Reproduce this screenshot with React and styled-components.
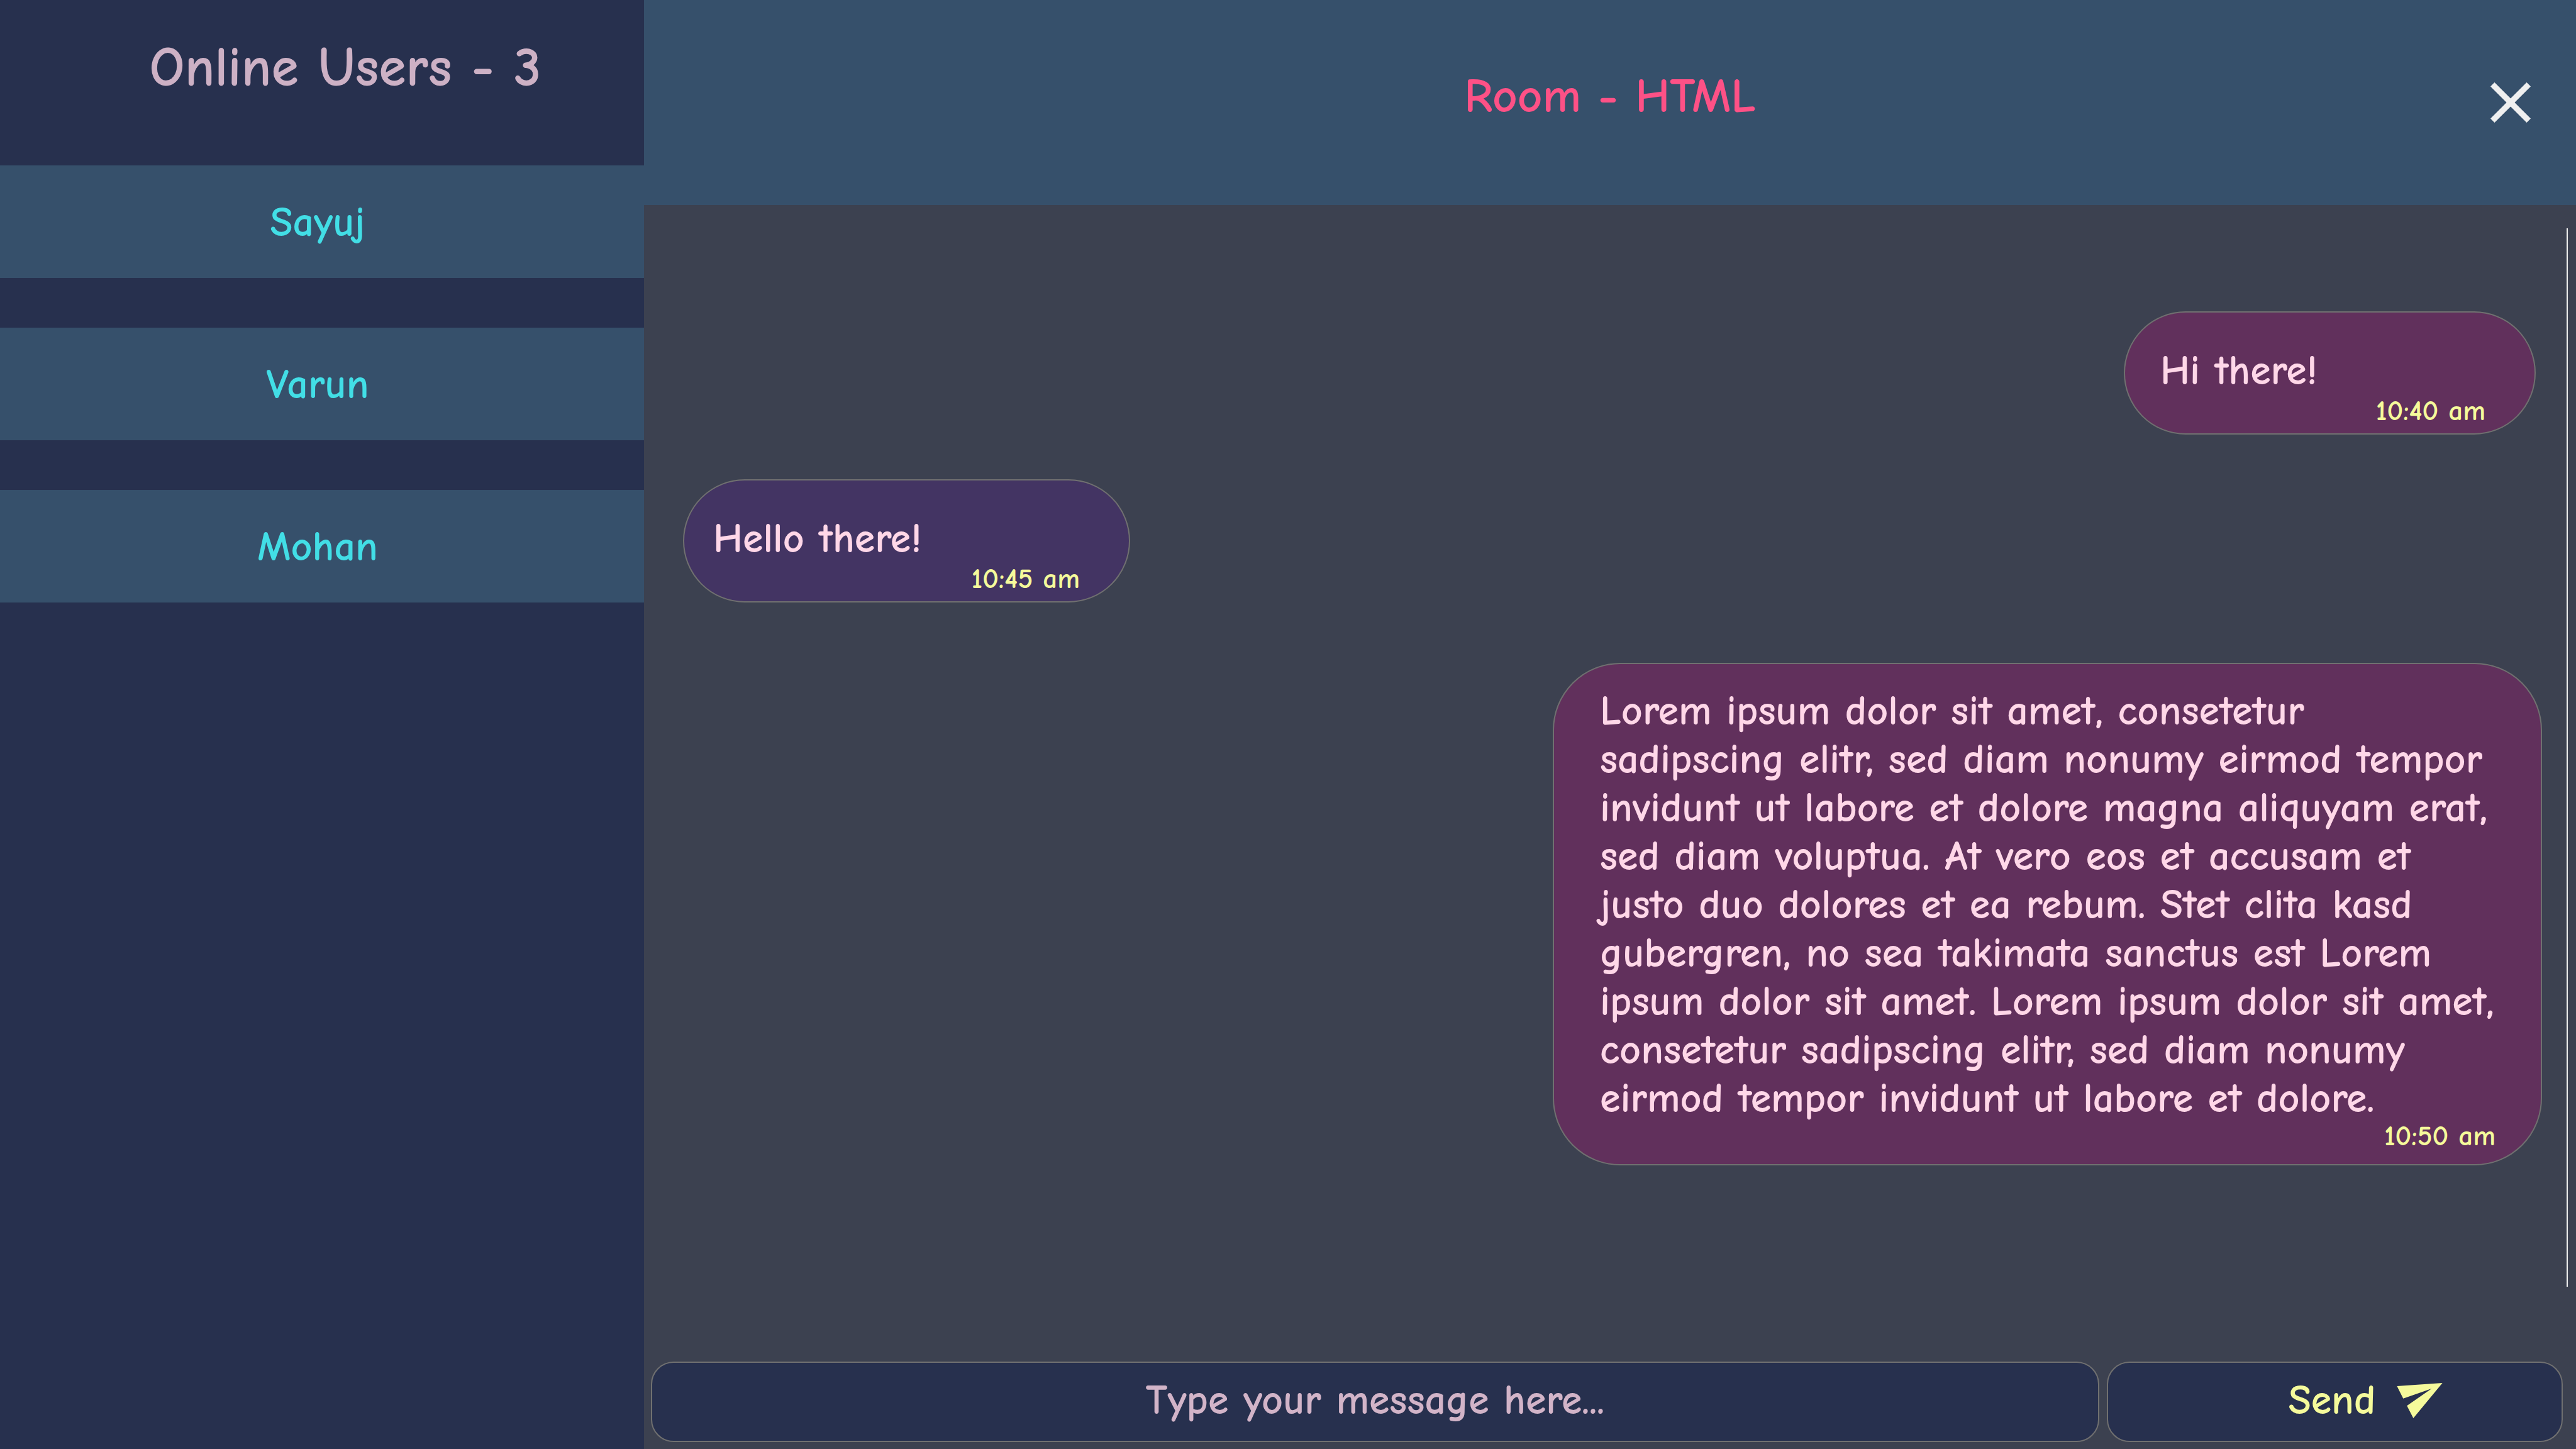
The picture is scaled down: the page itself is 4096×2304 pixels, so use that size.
import React from "react";
import styled, { createGlobalStyle } from "styled-components";

const GlobalStyle = createGlobalStyle`
  *, *::before, *::after { box-sizing: border-box; }
  body {
    margin: 0;
    background: #3c4150;
    font-family: "Comic Neue", Lato, "Noto Sans", sans-serif;
    font-weight: 700;
    font-size: 66px;
    line-height: 77px;
  }
`;

const Page = styled.div`
  display: grid;
  grid-template-columns: 25% minmax(0, 1fr);
  min-height: 100vh;
`;

const Sidebar = styled.aside`
  background: #27304e;
`;

const SidebarTitle = styled.h1`
  margin: 0;
  padding: 57px 0 104px 74px;
  color: #cdb1c5;
  font-size: 88px;
  line-height: 102px;
  text-align: center;
`;

const UserList = styled.ul`
  display: flex;
  flex-direction: column;
  gap: 79px;
  margin: 0;
  padding: 0;
  list-style: none;
`;

const User = styled.li`
  padding: 53px 14px 49px 0;
  background: #36506b;
  color: #42dee6;
  text-align: center;
`;

const Room = styled.main`
  display: grid;
  grid-template-rows: auto minmax(0, 1fr) auto;
`;

const RoomHeader = styled.header`
  display: grid;
  grid-template-columns: 1fr auto 1fr;
  align-items: center;
  padding: 108px 72px;
  background: #36506b;
`;

const RoomTitle = styled.h2`
  grid-column: 2;
  margin: 0;
  padding-bottom: 20px;
  color: #fe5186;
  font-size: 77px;
  line-height: 90px;
`;

const CloseButton = styled.button`
  justify-self: end;
  display: flex;
  padding: 0;
  border: 0;
  background: none;
  color: #f0f0f0;
  cursor: pointer;

  svg {
    width: 64px;
    height: 64px;
  }
`;

const Conversation = styled.section`
  display: flex;
`;

const Messages = styled.div`
  flex: 1;
  display: flex;
  flex-direction: column;
  gap: 71px;
  padding: 169px 39px 71px 62px;
`;

const ScrollLine = styled.div`
  width: 2px;
  margin: 37px 13px 119px 0;
  background: #f0f0f0;
`;

const Bubble = styled.article`
  display: flex;
  flex-direction: column;
  align-self: ${(p) => (p.$own ? "flex-end" : "flex-start")};
  width: ${(p) => p.$width}px;
  gap: ${(p) => (p.$long ? 0 : 4)}px;
  margin: ${(p) => (p.$long ? "25px 0 0" : p.$own ? "0 10px 0 0" : "0")};
  padding: ${(p) => (p.$long ? "37px 72px 25px 73px" : p.$own ? "55px 78px 16px 56px" : "55px 78px 16px 46px")};
  border: 2px solid #707070;
  border-radius: 107px;
  background: ${(p) => (p.$own ? "#61305c" : "#433463")};
`;

const BubbleText = styled.p`
  margin: 0;
  color: #ffd7e8;
`;

const Time = styled.time`
  align-self: flex-end;
  color: #f5fa9b;
  font-size: 45px;
  line-height: 40px;
`;

const Composer = styled.form`
  display: grid;
  grid-template-columns: minmax(0, 1fr) 725px;
  gap: 12px;
  padding: 0 21px 11px 11px;
`;

const MessageInput = styled.input`
  height: 128px;
  padding: 0 36px 4px;
  border: 2px solid #707070;
  border-radius: 36px;
  background: #27304e;
  color: #d2b4c8;
  font: inherit;
  text-align: center;
  outline: 0;

  &::placeholder {
    color: #d2b4c8;
    opacity: 1;
  }
`;

const SendButton = styled.button`
  display: flex;
  align-items: center;
  justify-content: center;
  gap: 34px;
  height: 128px;
  padding: 0 0 4px 98px;
  border: 2px solid #707070;
  border-radius: 36px;
  background: #27304e;
  color: #f5fa9b;
  font: inherit;
  cursor: pointer;

  svg {
    width: 73px;
    height: 56px;
  }
`;

const users = ["Sayuj", "Varun", "Mohan"];

const messages = [
  { text: "Hi there!", time: "10:40 am", own: true, width: 655 },
  { text: "Hello there!", time: "10:45 am", own: false, width: 711 },
  {
    text: "Lorem ipsum dolor sit amet, consetetur sadipscing elitr, sed diam nonumy eirmod tempor invidunt ut labore et dolore magna aliquyam erat, sed diam voluptua. At vero eos et accusam et justo duo dolores et ea rebum. Stet clita kasd gubergren, no sea takimata sanctus est Lorem ipsum dolor sit amet. Lorem ipsum dolor sit amet, consetetur sadipscing elitr, sed diam nonumy eirmod tempor invidunt ut labore et dolore.",
    time: "10:50 am",
    own: true,
    long: true,
    width: 1573,
  },
];

function CloseIcon() {
  return (
    <svg viewBox="5 5 14 14" fill="currentColor" aria-hidden="true">
      <path d="M19 6.41 17.59 5 12 10.59 6.41 5 5 6.41 10.59 12 5 17.59 6.41 19 12 13.41 17.59 19 19 17.59 13.41 12z" />
    </svg>
  );
}

function SendIcon() {
  return (
    <svg viewBox="0 0 102 79" fill="currentColor" aria-hidden="true">
      <path d="M0 7 102 0 36.7 79 22.3 51.3 77.7 12.7 14 35z" />
    </svg>
  );
}

export default function App() {
  return (
    <>
      <GlobalStyle />
      <Page>
        <Sidebar>
          <SidebarTitle>Online Users - {users.length}</SidebarTitle>
          <UserList>
            {users.map((name) => (
              <User key={name}>{name}</User>
            ))}
          </UserList>
        </Sidebar>
        <Room>
          <RoomHeader>
            <RoomTitle>Room - HTML</RoomTitle>
            <CloseButton type="button" aria-label="Leave room">
              <CloseIcon />
            </CloseButton>
          </RoomHeader>
          <Conversation>
            <Messages>
              {messages.map((m) => (
                <Bubble key={m.time} $own={m.own} $long={m.long} $width={m.width}>
                  <BubbleText>{m.text}</BubbleText>
                  <Time>{m.time}</Time>
                </Bubble>
              ))}
            </Messages>
            <ScrollLine />
          </Conversation>
          <Composer onSubmit={(e) => e.preventDefault()}>
            <MessageInput type="text" aria-label="Message" placeholder="Type your message here..." />
            <SendButton type="submit">
              Send
              <SendIcon />
            </SendButton>
          </Composer>
        </Room>
      </Page>
    </>
  );
}
